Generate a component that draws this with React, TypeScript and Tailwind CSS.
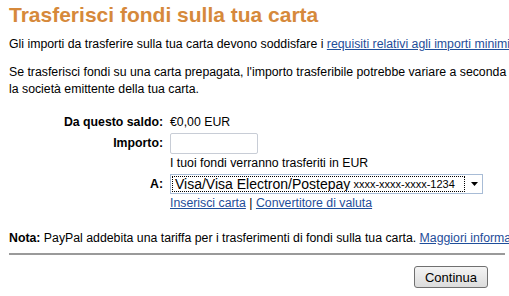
export default function App() {
  return (
    <div className="w-[509px] h-[296px] overflow-hidden bg-white text-[12.3px] leading-[17px] text-black font-['Liberation_Sans',Arial,sans-serif]">
      <div className="w-[620px] pl-[9px] pt-[3px]">
        <h1 className="text-[21px] leading-[24px] font-bold text-[#d6893b]">Trasferisci fondi sulla tua carta</h1>

        <p className="mt-[9px] whitespace-nowrap">
          Gli importi da trasferire sulla tua carta devono soddisfare i{" "}
          <a className="text-[#1f4e9a] underline">requisiti relativi agli importi minimi e massimi</a>
        </p>

        <p className="mt-[11px] whitespace-nowrap">
          Se trasferisci fondi su una carta prepagata, l'importo trasferibile potrebbe variare a seconda del tipo di carta e
          <br />
          la società emittente della tua carta.
        </p>

        <div className="mt-[16px] flex flex-col">
          <div className="flex gap-[7px] items-center h-[17px]">
            <span className="w-[154px] text-right font-bold">Da questo saldo:</span>
            <span>€0,00 EUR</span>
          </div>

          <div className="flex gap-[7px] items-center mt-[2px]">
            <span className="w-[154px] text-right font-bold">Importo:</span>
            <input className="w-[88px] h-[21px] border border-[#c8cdd6] rounded-[2px] bg-white" />
          </div>

          <div className="flex gap-[7px] h-[17px] mt-[1px]">
            <span className="w-[154px]" />
            <span>I tuoi fondi verranno trasferiti in EUR</span>
          </div>

          <div className="flex gap-[7px] items-center mt-[2px]">
            <span className="w-[154px] text-right font-bold">A:</span>
            <div className="w-[313px] h-[20px] border border-[#a8bcd6] bg-white flex items-center pl-[1px] pr-[4px]">
              <div className="flex-1 h-[16px] border border-dotted border-black flex items-center pl-[2px] text-[14px] leading-[14px] overflow-hidden whitespace-nowrap">
                Visa/Visa Electron/Postepay
                <span className="ml-[3px] text-[11px]">xxxx-xxxx-xxxx-1234</span>
              </div>
              <svg width="7" height="4" viewBox="0 0 7 4" className="ml-[6px]">
                <path d="M0 0h7L3.5 4z" fill="#000" />
              </svg>
            </div>
          </div>

          <div className="flex gap-[7px] h-[17px] mt-[1px]">
            <span className="w-[154px]" />
            <span>
              <a className="text-[#1f4e9a] underline">Inserisci carta</a> |{" "}
              <a className="text-[#1f4e9a] underline">Convertitore di valuta</a>
            </span>
          </div>
        </div>

        <p className="mt-[18px] whitespace-nowrap">
          <b>Nota:</b> PayPal addebita una tariffa per i trasferimenti di fondi sulla tua carta.{" "}
          <a className="text-[#1f4e9a] underline">Maggiori informazioni</a>
        </p>

        <div className="w-[496px] h-[2px] bg-[#9a9a9a] mt-[6px]" />

        <div className="w-[496px] flex justify-end mt-[11px] pr-[17px]">
          <button className="w-[74px] h-[22px] border border-[#707070] rounded-[3px] bg-gradient-to-b from-[#f4f4f4] to-[#dcdcdc] text-[13px] leading-[13px]">
            Continua
          </button>
        </div>
      </div>
    </div>
  );
}
